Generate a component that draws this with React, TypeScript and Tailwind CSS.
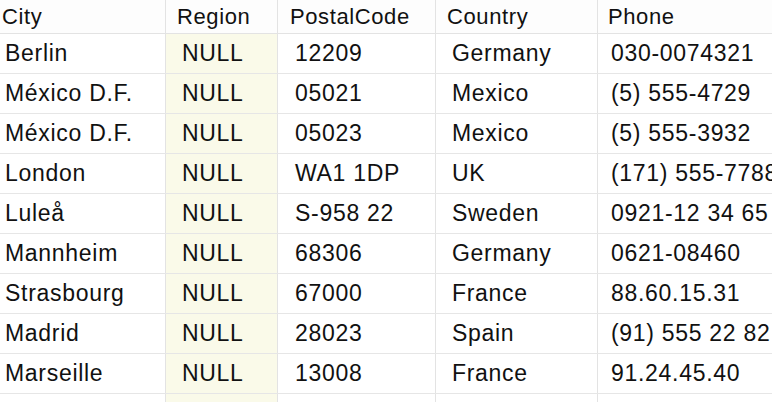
const columns = [
  { name: "City", w: "w-[166px]", head: "pl-[2px]", cell: "pl-[5px]" },
  { name: "Region", w: "w-[112px]", head: "pl-[11px]", cell: "pl-[16px]" },
  { name: "PostalCode", w: "w-[158px]", head: "pl-[12px]", cell: "pl-[17px]" },
  { name: "Country", w: "w-[162px]", head: "pl-[11px]", cell: "pl-[16px]" },
  { name: "Phone", w: "flex-1", head: "pl-[10px]", cell: "pl-[13px]" },
];

const rows = [
  ["Berlin", "NULL", "12209", "Germany", "030-0074321"],
  ["México D.F.", "NULL", "05021", "Mexico", "(5) 555-4729"],
  ["México D.F.", "NULL", "05023", "Mexico", "(5) 555-3932"],
  ["London", "NULL", "WA1 1DP", "UK", "(171) 555-7788"],
  ["Luleå", "NULL", "S-958 22", "Sweden", "0921-12 34 65"],
  ["Mannheim", "NULL", "68306", "Germany", "0621-08460"],
  ["Strasbourg", "NULL", "67000", "France", "88.60.15.31"],
  ["Madrid", "NULL", "28023", "Spain", "(91) 555 22 82"],
  ["Marseille", "NULL", "13008", "France", "91.24.45.40"],
  ["", "", "", "", ""],
];

export default function App() {
  return (
    <div className="w-[772px] h-[402px] overflow-hidden bg-white text-[#111] font-['Liberation_Sans',Arial,sans-serif]">
      {/* header */}
      <div className="flex h-[34px] border-b border-[#e3e3e3] bg-[#fdfdfd]">
        {columns.map((c, i) => (
          <div
            key={c.name}
            className={`${c.w} ${c.head} flex items-center whitespace-nowrap overflow-hidden text-[22px] tracking-[0.6px] ${
              i < 4 ? "border-r border-[#e3e3e3]" : ""
            }`}
          >
            {c.name}
          </div>
        ))}
      </div>

      {rows.map((r, ri) => (
        <div key={ri} className="flex h-[40px] border-b border-[#e6e6e6]">
          {r.map((v, ci) => (
            <div
              key={ci}
              className={`${columns[ci].w} ${columns[ci].cell} flex items-center whitespace-nowrap overflow-hidden text-[23px] tracking-[0.7px] ${
                ci < 4 ? "border-r border-[#e3e3e3]" : ""
              } ${ci === 1 ? "bg-[#fafae9]" : ""}`}
            >
              {v}
            </div>
          ))}
        </div>
      ))}
    </div>
  );
}
